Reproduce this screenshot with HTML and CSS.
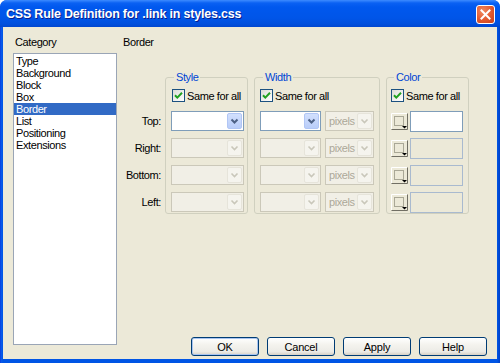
FILE: index.html
```html
<!DOCTYPE html>
<html>
<head>
<meta charset="utf-8">
<link rel="stylesheet" href="styles.css">
</head>
<body>
<div class="window">
  <div class="titlebar">
    <span class="title">CSS Rule Definition for .link in styles.css</span>
    <span class="close"><svg width="19" height="19" viewBox="0 0 19 19"><path d="M5.5 5.5 L13.5 13.5 M13.5 5.5 L5.5 13.5" stroke="#fff" stroke-width="2" stroke-linecap="square"/></svg></span>
  </div>
  <div class="frame">
    <div class="client">
      <div class="left">
        <div class="label cat">Category</div>
        <ul class="list">
          <li>Type</li>
          <li>Background</li>
          <li>Block</li>
          <li>Box</li>
          <li class="on">Border</li>
          <li>List</li>
          <li>Positioning</li>
          <li>Extensions</li>
        </ul>
      </div>
      <div class="right">
        <div class="label hdr">Border</div>
        <div class="groups">
          <div class="rowlabels">
            <span>Top:</span>
            <span>Right:</span>
            <span>Bottom:</span>
            <span>Left:</span>
          </div>
          <fieldset class="g g-style">
            <legend>Style</legend>
            <div class="chk"><span class="box"><svg width="11" height="11" viewBox="0 0 11 11"><path d="M2 5.2 L4.3 7.6 L9 2.8" fill="none" stroke="#21A121" stroke-width="2"/></svg></span>Same for all</div>
            <div class="rows">
              <div class="sel"><span class="arr"><svg width="15" height="16" viewBox="0 0 15 16"><path d="M4.5 6.5 L7.5 9.5 L10.5 6.5" fill="none" stroke="#4D6185" stroke-width="2"/></svg></span></div>
              <div class="sel dis"><span class="arr"><svg width="15" height="16" viewBox="0 0 15 16"><path d="M4.5 6.5 L7.5 9.5 L10.5 6.5" fill="none" stroke="#C9C7BA" stroke-width="1.6"/></svg></span></div>
              <div class="sel dis"><span class="arr"><svg width="15" height="16" viewBox="0 0 15 16"><path d="M4.5 6.5 L7.5 9.5 L10.5 6.5" fill="none" stroke="#C9C7BA" stroke-width="1.6"/></svg></span></div>
              <div class="sel dis"><span class="arr"><svg width="15" height="16" viewBox="0 0 15 16"><path d="M4.5 6.5 L7.5 9.5 L10.5 6.5" fill="none" stroke="#C9C7BA" stroke-width="1.6"/></svg></span></div>
            </div>
          </fieldset>
          <fieldset class="g g-width">
            <legend>Width</legend>
            <div class="chk"><span class="box"><svg width="11" height="11" viewBox="0 0 11 11"><path d="M2 5.2 L4.3 7.6 L9 2.8" fill="none" stroke="#21A121" stroke-width="2"/></svg></span>Same for all</div>
            <div class="rows">
              <div class="wrow">
                <div class="sel w1"><span class="arr"><svg width="15" height="16" viewBox="0 0 15 16"><path d="M4.5 6.5 L7.5 9.5 L10.5 6.5" fill="none" stroke="#4D6185" stroke-width="2"/></svg></span></div>
                <div class="sel dis unit"><span class="ut">pixels</span><span class="arr"><svg width="15" height="16" viewBox="0 0 15 16"><path d="M4.5 6.5 L7.5 9.5 L10.5 6.5" fill="none" stroke="#C9C7BA" stroke-width="1.6"/></svg></span></div>
              </div>
              <div class="wrow">
                <div class="sel dis w1"><span class="arr"><svg width="15" height="16" viewBox="0 0 15 16"><path d="M4.5 6.5 L7.5 9.5 L10.5 6.5" fill="none" stroke="#C9C7BA" stroke-width="1.6"/></svg></span></div>
                <div class="sel dis unit"><span class="ut">pixels</span><span class="arr"><svg width="15" height="16" viewBox="0 0 15 16"><path d="M4.5 6.5 L7.5 9.5 L10.5 6.5" fill="none" stroke="#C9C7BA" stroke-width="1.6"/></svg></span></div>
              </div>
              <div class="wrow">
                <div class="sel dis w1"><span class="arr"><svg width="15" height="16" viewBox="0 0 15 16"><path d="M4.5 6.5 L7.5 9.5 L10.5 6.5" fill="none" stroke="#C9C7BA" stroke-width="1.6"/></svg></span></div>
                <div class="sel dis unit"><span class="ut">pixels</span><span class="arr"><svg width="15" height="16" viewBox="0 0 15 16"><path d="M4.5 6.5 L7.5 9.5 L10.5 6.5" fill="none" stroke="#C9C7BA" stroke-width="1.6"/></svg></span></div>
              </div>
              <div class="wrow">
                <div class="sel dis w1"><span class="arr"><svg width="15" height="16" viewBox="0 0 15 16"><path d="M4.5 6.5 L7.5 9.5 L10.5 6.5" fill="none" stroke="#C9C7BA" stroke-width="1.6"/></svg></span></div>
                <div class="sel dis unit"><span class="ut">pixels</span><span class="arr"><svg width="15" height="16" viewBox="0 0 15 16"><path d="M4.5 6.5 L7.5 9.5 L10.5 6.5" fill="none" stroke="#C9C7BA" stroke-width="1.6"/></svg></span></div>
              </div>
            </div>
          </fieldset>
          <fieldset class="g g-color">
            <legend>Color</legend>
            <div class="chk"><span class="box"><svg width="11" height="11" viewBox="0 0 11 11"><path d="M2 5.2 L4.3 7.6 L9 2.8" fill="none" stroke="#21A121" stroke-width="2"/></svg></span>Same for all</div>
            <div class="rows">
              <div class="crow">
                <span class="swatch"><svg width="17" height="17" viewBox="0 0 17 17"><path d="M0.5 16 V0.5 H16" fill="none" stroke="#fff"/><path d="M0.5 16.5 H16.5 V0.5" fill="none" stroke="#716F64"/><rect x="3.5" y="3.5" width="9" height="9" fill="none" stroke="#A9A796"/><path d="M11 13 H16 L13.5 15.5 Z" fill="#000"/></svg></span>
                <span class="tin"></span>
              </div>
              <div class="crow">
                <span class="swatch"><svg width="17" height="17" viewBox="0 0 17 17"><path d="M0.5 16 V0.5 H16" fill="none" stroke="#fff"/><path d="M0.5 16.5 H16.5 V0.5" fill="none" stroke="#716F64"/><rect x="3.5" y="3.5" width="9" height="9" fill="none" stroke="#A9A796"/><path d="M11 13 H16 L13.5 15.5 Z" fill="#000"/></svg></span>
                <span class="tin dis"></span>
              </div>
              <div class="crow">
                <span class="swatch"><svg width="17" height="17" viewBox="0 0 17 17"><path d="M0.5 16 V0.5 H16" fill="none" stroke="#fff"/><path d="M0.5 16.5 H16.5 V0.5" fill="none" stroke="#716F64"/><rect x="3.5" y="3.5" width="9" height="9" fill="none" stroke="#A9A796"/><path d="M11 13 H16 L13.5 15.5 Z" fill="#000"/></svg></span>
                <span class="tin dis"></span>
              </div>
              <div class="crow">
                <span class="swatch"><svg width="17" height="17" viewBox="0 0 17 17"><path d="M0.5 16 V0.5 H16" fill="none" stroke="#fff"/><path d="M0.5 16.5 H16.5 V0.5" fill="none" stroke="#716F64"/><rect x="3.5" y="3.5" width="9" height="9" fill="none" stroke="#A9A796"/><path d="M11 13 H16 L13.5 15.5 Z" fill="#000"/></svg></span>
                <span class="tin dis"></span>
              </div>
            </div>
          </fieldset>
        </div>
        <div class="btns">
          <button class="btn def">OK</button>
          <button class="btn">Cancel</button>
          <button class="btn">Apply</button>
          <button class="btn">Help</button>
        </div>
      </div>
    </div>
  </div>
</div>
</body>
</html>
```
FILE: styles.css
```css
* { box-sizing: border-box; }
html, body { margin: 0; padding: 0; }
body {
  width: 500px;
  height: 363px;
  overflow: hidden;
  background: #fff;
  font-family: "Liberation Sans", Arial, sans-serif;
  font-size: 11px;
  letter-spacing: -0.4px;
  color: #000;
}
.window {
  width: 500px;
  height: 363px;
  display: flex;
  flex-direction: column;
  background: #0053E1;
  border-radius: 7px 7px 0 0;
  overflow: hidden;
}
.titlebar {
  height: 27px;
  flex: none;
  display: flex;
  align-items: center;
  justify-content: space-between;
  padding: 1px 5px 0 6px;
  background: linear-gradient(#3D8BFF 0, #0A61F3 3px, #0058EE 7px, #0055E8 18px, #004FDD 24px, #0046CF 27px);
}
.title {
  color: #fff;
  font-weight: bold;
  font-size: 12.5px;
  letter-spacing: -0.2px;
  text-shadow: 1px 1px 0 #0A1E8C;
}
.close {
  width: 19px;
  height: 19px;
  border: 1px solid #fff;
  border-radius: 3px;
  background: radial-gradient(circle at 35% 30%, #F08A62 0, #E2582E 55%, #C7401C 100%);
  display: flex;
  align-items: center;
  justify-content: center;
}
.close svg { margin: -1px; }
.frame {
  flex: 1;
  display: flex;
  padding: 0 3px 4px 3px;
  background: linear-gradient(90deg, #0831D9 0, #0A5AEB 1px, #0055E5 3px, #0055E5 497px, #0040C8 500px);
}
.client {
  flex: 1;
  display: flex;
  gap: 6px;
  padding: 9px 10px 3px 10px;
  background: #ECE9D8;
}
.left {
  width: 104px;
  display: flex;
  flex-direction: column;
}
.label { line-height: 13px; height: 13px; }
.cat { padding-left: 2px; margin-bottom: 4px; }
.list {
  list-style: none;
  margin: 0;
  padding: 1px 0 0 0;
  height: 292px;
  border: 1px solid #9AA5B6;
  background: #fff;
}
.list li {
  height: 12px;
  line-height: 12px;
  padding-left: 2px;
}
.list li.on { background: #316AC5; color: #fff; }
.right {
  flex: 1;
  display: flex;
  flex-direction: column;
}
.hdr { margin-bottom: 22px; }
.groups {
  display: flex;
  align-items: flex-start;
}
.rowlabels {
  width: 42px;
  flex: none;
  padding: 40px 4px 0 0;
  display: flex;
  flex-direction: column;
  gap: 7px;
  text-align: right;
}
.rowlabels span { height: 20px; line-height: 20px; }
.g {
  margin: 0;
  min-width: 0;
  flex: none;
  border: 1px solid #D0D0BF;
  border-radius: 3px;
  padding: 0 3px 1px 5px;
}
.g + .g { margin-left: 6px; }
.g legend {
  padding: 0 2px;
  margin-left: 3px;
  color: #0046D5;
  line-height: 13px;
}
.g-style { width: 83px; }
.g-width { width: 126px; }
.g-color { width: 83px; padding-left: 4px; }
.chk {
  display: flex;
  align-items: center;
  height: 15px;
  margin: 4px 0 8px 1px;
  white-space: nowrap;
}
.g-width .chk, .g-color .chk { margin-left: 0; }
.box {
  width: 13px;
  height: 13px;
  border: 1px solid #1C5180;
  background: linear-gradient(135deg, #DCDCD7, #FFFFFF);
  margin-right: 2px;
  display: flex;
  align-items: center;
  justify-content: center;
  flex: none;
}
.rows {
  display: flex;
  flex-direction: column;
  gap: 7px;
}
.sel {
  height: 20px;
  border: 1px solid #7F9DB9;
  background: #fff;
  display: flex;
  justify-content: flex-end;
  align-items: center;
  padding: 1px;
}
.sel .arr {
  width: 15px;
  height: 16px;
  border-radius: 2px;
  background: linear-gradient(#D2E0FD, #B9CDF9);
  border: 1px solid #B1C6F5;
  display: flex;
  align-items: center;
  justify-content: center;
}
.sel .arr svg { margin: -1px; }
.sel.dis {
  border-color: #CBC8B9;
  background: #F1EFE6;
}
.sel.dis .arr {
  background: #F5F4EE;
  border-color: #E6E4DA;
}
.wrow { display: flex; gap: 4px; }
.w1 { width: 61px; flex: none; }
.unit { width: 49px; flex: none; justify-content: space-between; }
.ut { color: #ACA899; padding-left: 2px; }
.crow {
  display: flex;
  align-items: center;
  gap: 2px;
  height: 20px;
}
.swatch { width: 17px; height: 17px; display: flex; flex: none; }
.tin {
  width: 53px;
  height: 21px;
  flex: none;
  border: 1px solid #7F9DB9;
  background: #fff;
}
.tin.dis {
  border-color: #A9BACF;
  background: #ECE9D8;
}
.btns {
  margin-top: auto;
  display: flex;
  justify-content: flex-end;
  gap: 8px;
}
.btn {
  width: 68px;
  height: 19px;
  padding: 0;
  border: 1px solid #003C74;
  border-radius: 3px;
  background: linear-gradient(#FFFFFF 0, #F4F3EE 40%, #ECEBE6 80%, #D6D0C5 100%);
  font-family: "Liberation Sans", Arial, sans-serif;
  font-size: 11px;
  letter-spacing: -0.2px;
  color: #000;
}
.btn.def {
  box-shadow: inset 0 0 0 1px #A8C4F0;
}
```
